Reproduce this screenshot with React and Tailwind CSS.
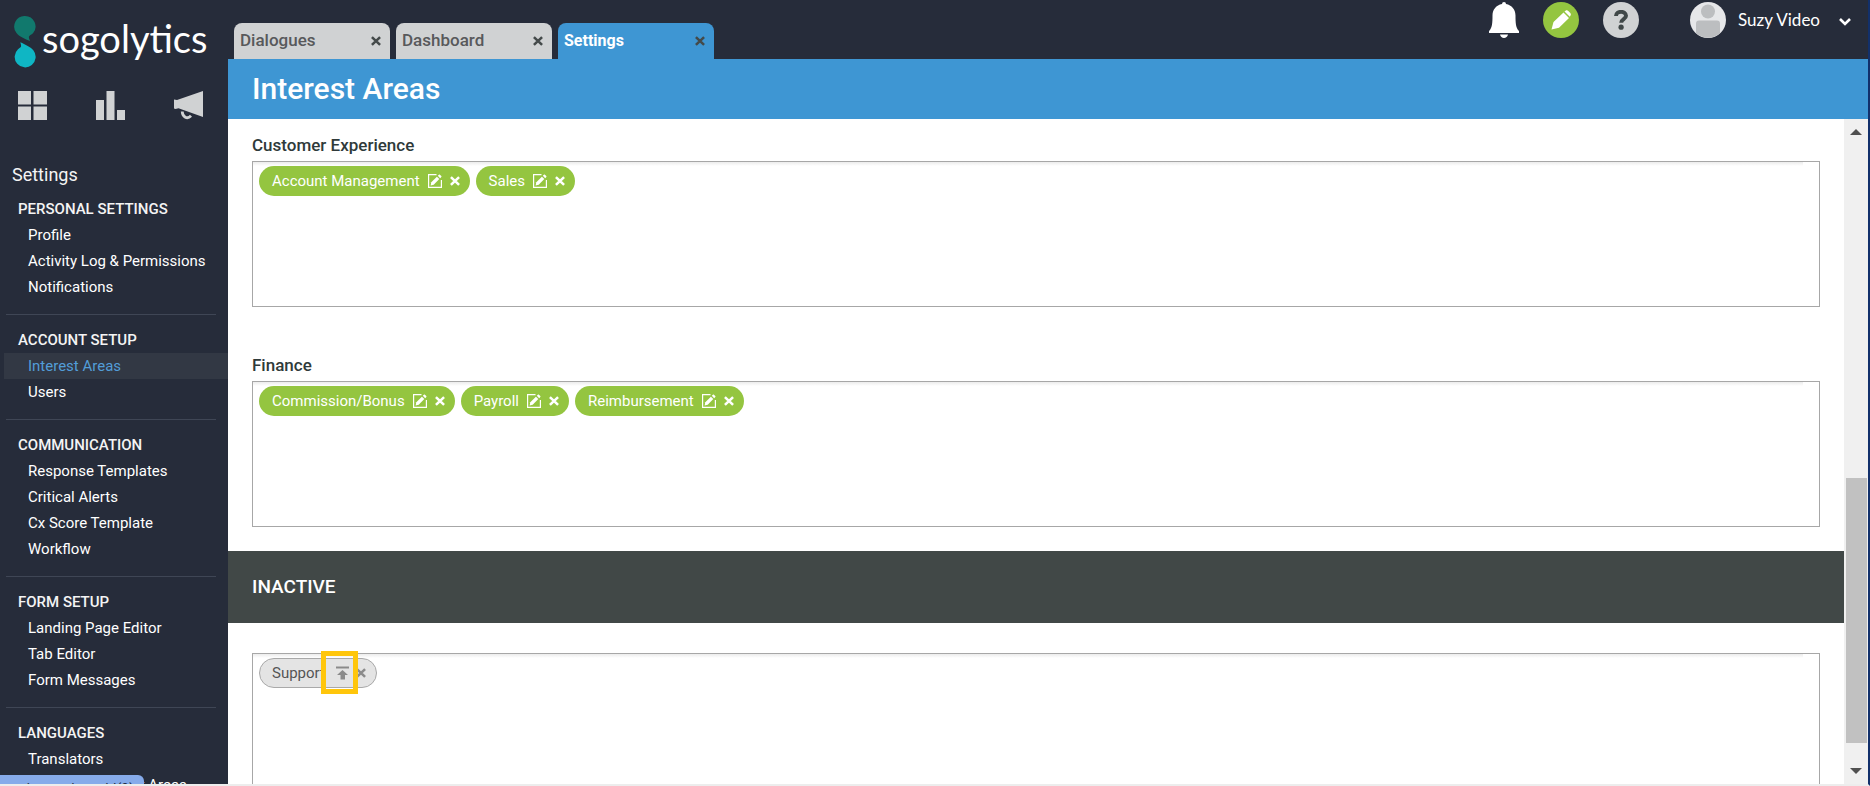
const sections = [
  { title: 'PERSONAL SETTINGS', items: ['Profile', 'Activity Log & Permissions', 'Notifications'] },
  { title: 'ACCOUNT SETUP', items: ['Interest Areas', 'Users'] },
  { title: 'COMMUNICATION', items: ['Response Templates', 'Critical Alerts', 'Cx Score Template', 'Workflow'] },
  { title: 'FORM SETUP', items: ['Landing Page Editor', 'Tab Editor', 'Form Messages'] },
  { title: 'LANGUAGES', items: ['Translators', 'Translate Interest Areas'] },
];

const tabs = ['Dialogues', 'Dashboard', 'Settings'];

function Cross({ className }) {
  return (
    <svg viewBox="0 0 11 11" className={className} fill="none" stroke="currentColor" strokeWidth="2.8" aria-hidden="true">
      <path d="M1 1.2 10 9.8M10 1.2 1 9.8" />
    </svg>
  );
}

function EditIcon() {
  return (
    <svg viewBox="0 0 14 14" className="size-3.5" fill="none" stroke="currentColor" aria-hidden="true">
      <path d="M8.5.6H.6v12.8h12.8V6" strokeWidth="1.2" />
      <path d="m2.6 11.4.7-3.1 5.6-5.6 2.4 2.4-5.6 5.6z" fill="currentColor" stroke="none" />
      <path d="m9.8 1.8 1.1-1.1c.3-.3.7-.3 1 0l1.4 1.4c.3.3.3.7 0 1l-1.1 1.1z" fill="currentColor" stroke="none" />
    </svg>
  );
}

function ReactivateIcon() {
  return (
    <svg viewBox="0 0 13 14" className="h-3.5 w-[13px]" fill="currentColor" aria-hidden="true">
      <path d="M0 .5h13v2H0zM6.5 4l5.500 5H9v4.500H4.500V9H1z" />
    </svg>
  );
}

function Logo() {
  return (
    <a href="#home" className="flex h-[76px] shrink-0 items-center gap-1.5 pl-3.5 text-white">
      <svg viewBox="0 0 22 52" className="mt-2 h-[52px] w-[22px] shrink-0" aria-hidden="true">
        <path fill="#11796d" d="M11 0a10.500 10.500 0 0 1 8 17.300c-1.700 1.700-3.500 1.900-4 3.200-.4 1.200.3 2.700 1.200 4.500C11 23 5 20.500 2.500 17A10.500 10.500 0 0 1 11 0z" />
        <path fill="#0fb6c4" d="M6.300 26.200C11 28.500 17 31 19.500 34.500A10.500 10.500 0 1 1 4 33.200c1.300-1.200 2.700-1.600 3-2.700.2-1.200-.1-2.500-.7-4.300z" />
      </svg>
      <span className="font-['Lato',sans-serif] text-[38px] leading-10">sogolytics</span>
    </a>
  );
}

function Sidebar() {
  return (
    <aside className="flex w-[228px] shrink-0 flex-col overflow-hidden bg-[#262c3a] text-[#f4f4f4]">
      <Logo />
      <div className="flex h-[59px] shrink-0 items-center justify-between pr-[25px] pl-[18px] text-[#d0d2d3]">
        <button type="button" aria-label="Home">
          <svg viewBox="0 0 29 29" className="size-[29px]" fill="currentColor">
            <path d="M0 0h13v13.500H0zM15.500 0H29v13.500H15.500zM0 15.500h13V29H0zM15.500 15.500H29V29H15.500z" />
          </svg>
        </button>
        <button type="button" aria-label="Reports">
          <svg viewBox="0 0 29 29" className="size-[29px]" fill="currentColor">
            <path d="M0 9h8v20H0zM10.500 0h8v29h-8zM21 19h8v10h-8z" />
          </svg>
        </button>
        <button type="button" aria-label="Campaigns">
          <svg viewBox="0 0 29 29" className="size-[29px]" fill="currentColor">
            <path d="M29 0v26L4.500 17.200 1.500 18 0 17.500V8.500l3 .5z" />
            <path d="M8.200 20.500c.3 5.500 5 8.300 8.800 4.200" fill="none" stroke="currentColor" strokeWidth="2.800" />
          </svg>
        </button>
      </div>
      <h2 className="mt-7 shrink-0 pl-3 text-lg leading-6">Settings</h2>
      <nav className="mt-[9px] flex shrink-0 flex-col">
        {sections.map((s, i) => (
          <section key={s.title} className="pb-3.5">
            {i > 0 && <hr className="mr-3 mb-3 ml-1.5 border-0 border-t border-[#3f4655]" />}
            <h3 className="pl-[18px] text-[15px] leading-[26px] font-medium">{s.title}</h3>
            <ul>
              {s.items.map((item) => (
                <li key={item} className="pl-1">
                  <a
                    href="#settings"
                    className={
                      item === 'Interest Areas'
                        ? 'block bg-[#323844] pl-6 text-[15px] leading-[26px] whitespace-nowrap text-[#529dd8]'
                        : 'block pl-6 text-[15px] leading-[26px] whitespace-nowrap text-white'
                    }
                  >
                    {item}
                  </a>
                </li>
              ))}
            </ul>
          </section>
        ))}
      </nav>
    </aside>
  );
}

function Header() {
  return (
    <header className="flex h-[59px] shrink-0 items-start justify-between bg-[#262c3a] pr-[17px] pl-1.5">
      <div className="flex gap-1.5 self-end">
        {tabs.map((tab) => {
          const active = tab === 'Settings';
          return (
            <div
              key={tab}
              className={
                active
                  ? 'flex h-9 w-[156px] items-center justify-between rounded-t-lg bg-[#3e96d3] pr-[9px] pl-1.5 text-base font-bold text-white'
                  : 'flex h-9 w-[156px] items-center justify-between rounded-t-lg bg-[#d0d2d3] pr-[9px] pl-1.5 text-[17px] font-medium text-[#58595b]'
              }
            >
              <a href="#tab">{tab}</a>
              <button type="button" aria-label={`Close ${tab}`} className="text-[#444a4a]">
                <Cross className="size-2.5" />
              </button>
            </div>
          );
        })}
      </div>
      <div className="flex h-10 items-center">
        <button type="button" aria-label="Notifications" className="mr-6">
          <svg viewBox="0 0 30 36" className="h-9 w-[30px]" fill="#fff">
            <path d="M13 2a2 2 0 0 1 4 0c5.800 1.200 9.500 5.500 9.500 11.500 0 8 .5 11.500 2.500 14.500l1 1v2H0v-2l1-1c2-3 2.500-6.500 2.500-14.500C3.500 7.500 7.200 3.200 13 2zM11 32.500h8c-.5 2-2 3.500-4 3.500s-3.500-1.500-4-3.500z" />
          </svg>
        </button>
        <button type="button" aria-label="Edit" className="mr-6">
          <svg viewBox="0 0 36 36" className="size-9">
            <circle cx="18" cy="18" r="18" fill="#94c540" />
            <path fill="#fff" d="m8.500 27.500 2-7.500L20.500 10.500l5.500 5.500-10 9.800zM21.500 9.500l1-.7c1-.7 2-.6 2.800.2l2 2c.8.8.8 1.900.1 2.700l-.6 1.100z" />
          </svg>
        </button>
        <button type="button" aria-label="Help" className="mr-[51px] flex size-9 items-center justify-center rounded-full bg-[#d0d2d3]">
          <svg viewBox="0 0 14 20" className="h-5 w-3.5" fill="none" stroke="#404848">
            <path d="M2 6C2 .5 12 .5 12 5.800c0 3.500-4.800 3.200-4.800 7" strokeWidth="4" />
            <circle cx="7.100" cy="17.200" r="2.600" fill="#404848" stroke="none" />
          </svg>
        </button>
        <button type="button" className="flex items-center text-white">
          <svg viewBox="0 0 36 36" className="mr-3 size-9" aria-hidden="true">
            <circle cx="18" cy="18" r="18" fill="#e6e7e9" />
            <circle cx="18" cy="9.500" r="7" fill="#bcbec0" />
            <path d="M6 31V21.500a3 3 0 0 1 3-3h18a3 3 0 0 1 3 3V31a17.700 17.700 0 0 1-24 0z" fill="#bcbec0" />
          </svg>
          <span className="mr-[19px] font-['Lato',sans-serif] text-[17px]">Suzy Video</span>
          <svg viewBox="0 0 12 8" className="mt-1 h-2 w-3" fill="none" stroke="currentColor" strokeWidth="2.600" aria-hidden="true">
            <path d="m1 1 5 5 5-5" />
          </svg>
        </button>
      </div>
    </header>
  );
}

function Chip({ label }) {
  return (
    <li className="flex h-[30px] items-center rounded-full bg-[#94c540] pr-2.5 pl-[13px] text-white">
      <span className="text-[15px]">{label}</span>
      <button type="button" aria-label={`Edit ${label}`} className="ml-2">
        <EditIcon />
      </button>
      <button type="button" aria-label={`Remove ${label}`} className="ml-2">
        <Cross className="size-2.5" />
      </button>
    </li>
  );
}

function BoxShade() {
  return <div className="mr-4 h-1 shrink-0 bg-linear-to-b from-[#ececec] to-white" />;
}

function Area({ title, chips }) {
  return (
    <section className="px-6 pt-3.5">
      <h2 className="mb-1 text-[17px] leading-6 font-medium text-[#2f3a3a]">{title}</h2>
      <div className="mb-1 h-[146px] border border-[#a7a7a7]">
        <BoxShade />
        <ul className="flex flex-wrap gap-1.5 px-1.5">
          {chips.map((c) => (
            <Chip key={c} label={c} />
          ))}
        </ul>
      </div>
    </section>
  );
}

export default function App() {
  return (
    <div className="relative flex h-screen overflow-hidden border-r-2 border-b-2 border-r-[#12306b] border-b-[#ededed] bg-white font-['Roboto',sans-serif]">
      <Sidebar />
      <div className="flex min-w-0 flex-1 flex-col">
        <Header />
        <div className="flex h-[60px] shrink-0 items-center bg-[#3e96d3] px-6">
          <h1 className="text-[30px] leading-8 font-medium text-white">Interest Areas</h1>
        </div>
        <div className="flex min-h-0 flex-1">
          <main className="flex min-w-0 flex-1 flex-col overflow-hidden">
            <Area title="Customer Experience" chips={['Account Management', 'Sales']} />
            <div className="h-7 shrink-0" />
            <Area title="Finance" chips={['Commission/Bonus', 'Payroll', 'Reimbursement']} />
            <h2 className="mt-5 flex h-[72px] shrink-0 items-center bg-[#414847] px-6 text-[19px] font-medium text-white">INACTIVE</h2>
            <div className="mx-6 mt-[30px] flex-1 border border-b-0 border-[#a7a7a7]">
              <BoxShade />
              <ul className="flex px-1.5">
                <li className="flex h-[30px] items-center rounded-full border border-[#a9a9a9] bg-[#e4e4e4] pr-2.5 pl-3 text-[#555]">
                  <span className="text-[15px]">Support</span>
                  <button type="button" aria-label="Reactivate Support" className="relative ml-[11px] text-[#8b8b8b]">
                    <ReactivateIcon />
                    <span className="absolute -top-[15px] -left-[15px] h-[43px] w-[37px] border-5 border-[#ffc60b]" />
                  </button>
                  <button type="button" aria-label="Remove Support" className="ml-[7px] text-[#8b8b8b]">
                    <Cross className="size-2.5" />
                  </button>
                </li>
              </ul>
            </div>
          </main>
          <div className="flex w-6 shrink-0 flex-col items-center bg-[#f0f0f0] py-2.5" aria-hidden="true">
            <svg viewBox="0 0 12 6" className="h-1.5 w-3" fill="#505050"><path d="M6 0l6 6H0z" /></svg>
            <div className="flex min-h-0 flex-1 flex-col self-stretch pr-px pl-0.5">
              <div className="flex-[343]" />
              <div className="flex-[265] bg-[#c1c1c1]" />
              <div className="flex-[25]" />
            </div>
            <svg viewBox="0 0 12 6" className="h-1.5 w-3" fill="#505050"><path d="M0 0h12L6 6z" /></svg>
          </div>
        </div>
      </div>
      <div className="absolute -bottom-0.5 left-0 h-[11px] w-36 overflow-hidden rounded-tr-md bg-[#86abea] pt-2 pr-2.5 text-right text-sm leading-3 text-[#202b3f]">
        javascript:void(0)
      </div>
    </div>
  );
}
